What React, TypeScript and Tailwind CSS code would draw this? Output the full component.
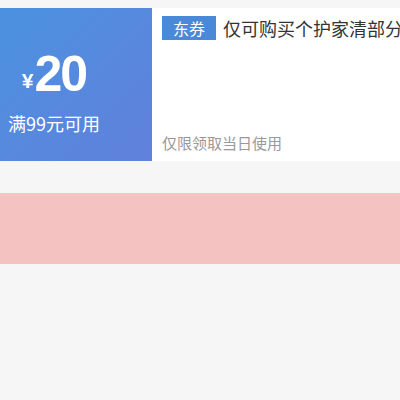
export default function App() {
  return (
    <div className="w-[400px] h-[400px] bg-[#f6f6f6] overflow-hidden" style={{ fontFamily: '"Noto Sans CJK SC", "Liberation Sans", sans-serif' }}>
      <div className="h-[8px]" />
      <div className="flex h-[153px] bg-white">
        <div className="w-[152px] shrink-0 flex flex-col items-center pr-[44px] bg-gradient-to-br from-[#4a92e0] to-[#6080dc] text-white">
          <div className="flex items-end mt-[41px] h-[50px]">
            <span className="text-[21px] font-bold leading-none mb-[8px] mr-[1px]" style={{ fontFamily: '"Liberation Sans", sans-serif' }}>¥</span>
            <span className="text-[50px] font-bold leading-none tracking-[-2px]" style={{ fontFamily: '"Liberation Sans", sans-serif' }}>20</span>
          </div>
          <div className="mt-[15px] text-[18px] leading-[18px] whitespace-nowrap">满99元可用</div>
        </div>
        <div className="flex-1 min-w-0 flex flex-col pl-[10px] pt-[8px] pb-[8px]">
          <div className="flex items-center whitespace-nowrap overflow-hidden">
            <span className="shrink-0 bg-[#4a88d8] text-white text-[16px] leading-[24px] h-[24px] px-[11px]">东券</span>
            <span className="ml-[7px] text-[18px] text-[#333] leading-[24px]">仅可购买个护家清部分商品</span>
          </div>
          <div className="flex-1" />
          <div className="text-[15px] leading-[20px] text-[#999]">仅限领取当日使用</div>
        </div>
      </div>
      <div className="h-[32px]" />
      <div className="h-[71px] bg-[#f5c2c2] border-t-[4px] border-[#f2c6c0]" />
    </div>
  );
}
